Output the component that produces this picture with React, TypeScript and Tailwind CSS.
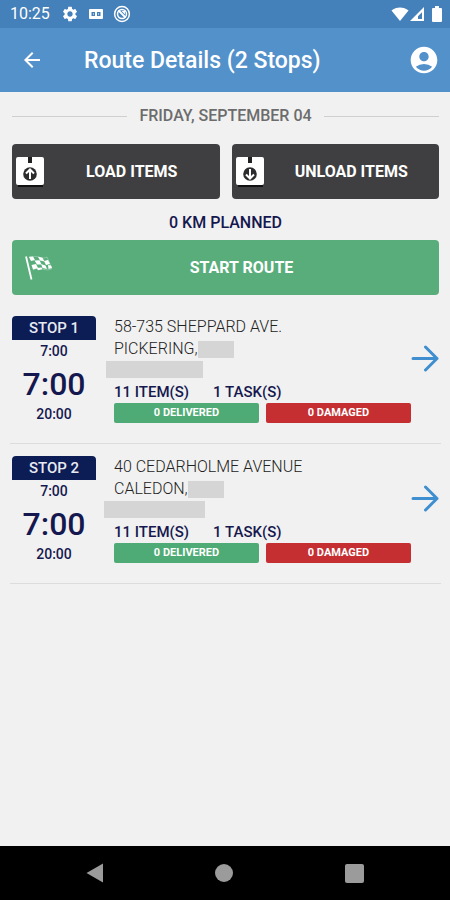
import { useState } from 'react'
import { MdAccountCircle, MdArrowBack, MdSettings } from 'react-icons/md'

interface Stop {
  id: number
  street: string
  city: string
  opens: string
  eta: string
  closes: string
  items: number
  tasks: number
  delivered: number
  damaged: number
  cityMask: string
  postalMask: string
}

const STOPS: Stop[] = [
  {
    id: 1,
    street: '58-735 SHEPPARD AVE.',
    city: 'PICKERING,',
    opens: '7:00',
    eta: '7:00',
    closes: '20:00',
    items: 11,
    tasks: 1,
    delivered: 0,
    damaged: 0,
    cityMask: 'w-9',
    postalMask: '-ml-2 w-[97px]',
  },
  {
    id: 2,
    street: '40 CEDARHOLME AVENUE',
    city: 'CALEDON,',
    opens: '7:00',
    eta: '7:00',
    closes: '20:00',
    items: 11,
    tasks: 1,
    delivered: 0,
    damaged: 0,
    cityMask: 'w-9',
    postalMask: '-ml-2.5 w-[101px]',
  },
]

function StatusBar() {
  return (
    <div className="flex h-7 items-center bg-[#4480b9] pr-2 pl-2.5 text-white">
      <span className="w-[51px] text-base">10:25</span>
      <MdSettings className="size-[18px]" />
      <svg viewBox="0 0 14 10" className="ml-2.5 h-2.5 w-3.5" aria-hidden="true">
        <path
          d="M1 0h12a1 1 0 0 1 1 1v8a1 1 0 0 1-1 1H1a1 1 0 0 1-1-1V1a1 1 0 0 1 1-1zM2.5 3v4H6V3zM8 3v4h3.5V3z"
          fill="currentColor"
          fillRule="evenodd"
        />
        <path d="M4 5h1M9 5h1" stroke="currentColor" />
      </svg>
      <svg viewBox="0 0 18 18" className="ml-2.5 size-[18px]" fill="none" stroke="currentColor" aria-hidden="true">
        <circle cx="9" cy="9" r="7.4" strokeWidth="1.5" />
        <circle cx="9" cy="9" r="4.5" strokeWidth="1.5" />
        <path d="M5.5 5.5l7 7" strokeWidth="1.8" />
        <path d="M8.5 6H12v3.5z" fill="currentColor" stroke="none" />
      </svg>
      <div className="ml-auto flex items-center">
        <svg viewBox="0 0 18 14" className="h-3.5 w-[18px]" fill="currentColor" aria-hidden="true">
          <path d="M9 14L0.5 3.4C5 -0.6 13 -0.6 17.5 3.4z" />
        </svg>
        <svg viewBox="0 0 16 16" className="size-4" aria-hidden="true">
          <path
            d="M15 1v14H1zM13 6.2L9 10.2V13h4z"
            fill="currentColor"
            fillRule="evenodd"
          />
        </svg>
        <svg viewBox="0 0 10 16" className="ml-[7px] h-4 w-2.5" fill="currentColor" aria-hidden="true">
          <path d="M3 0h4v2h2a1 1 0 0 1 1 1v12a1 1 0 0 1-1 1H1a1 1 0 0 1-1-1V3a1 1 0 0 1 1-1h2z" />
        </svg>
      </div>
    </div>
  )
}

function BoxIcon({ direction }: { direction: 'up' | 'down' }) {
  return (
    <svg viewBox="0 0 28 30" className="h-[30px] w-7" aria-hidden="true">
      <path d="M2 29h25" stroke="#111" strokeWidth="2" />
      <path d="M11 0h6v7h-6z" fill="#222" />
      <path d="M2 0h10v6h4V0h10a2 2 0 0 1 2 2v24a2 2 0 0 1-2 2H2a2 2 0 0 1-2-2V2a2 2 0 0 1 2-2z" fill="white" />
      <circle cx="14" cy="17" r="6.8" fill="#2c2c2e" />
      <path
        d={direction === 'up' ? 'M14 22v-9M10 16.5l4-4 4 4' : 'M14 12v9M10 17.5l4 4 4-4'}
        fill="none"
        stroke="white"
        strokeWidth="2"
      />
    </svg>
  )
}

function FlagIcon() {
  return (
    <svg viewBox="0 0 28 24" className="h-6 w-7" aria-hidden="true">
      <path d="M2 0.5l5.5 23" stroke="white" strokeWidth="1.8" />
      <path
        d="M5 1l4-0.5 2 3.5-4 1zM14 0.8l4.500 1 2 3.700-4.500-1zM10.500 4.500l5-0.300 2 4-4.500 0.300zM20 5l4-1 2 4-4 1zM7.500 9l4.500-1 2 4-5 1.500zM17 8l4.500 1.500 1.500 3.500-4.500-1zM13 12l4.500-0.500 0.800 1.800-4.500 1zM24 9l3 0.500 1 2.500-3.500 1z"
        fill="white"
      />
      <path
        d="M5 1c4-1.500 7-0.500 9.500 0s5 2 8.500 0l5 11.500c-4 2.500-7 1-9.500 0.500s-5-1.500-9.500 0.800"
        fill="none"
        stroke="white"
        strokeOpacity="0.5"
        strokeWidth="0.6"
      />
    </svg>
  )
}

function StopRow({ stop }: { stop: Stop }) {
  return (
    <li className="border-b border-[#dcdcdc] pt-3 pb-[19px]">
      <div className="flex px-0.5">
        <div className="flex w-[84px] shrink-0 flex-col text-center text-sm font-medium text-[#15184f]">
          <span className="rounded-t bg-[#0c1c54] text-[15px] leading-6 text-[#e8eaf2]">STOP {stop.id}</span>
          <span className="leading-[22px]">{stop.opens}</span>
          <span className="pt-0.5 text-[32px] leading-10">{stop.eta}</span>
          <span className="leading-5">{stop.closes}</span>
        </div>

        <div className="ml-[18px] min-w-0 flex-1 text-base leading-[22px] font-light text-[#222]">
          <p>{stop.street}</p>
          <p className="flex items-center">
            {stop.city}
            <span className={`h-[17px] bg-[#d5d5d5] ${stop.cityMask}`} />
          </p>
          <div className={`mt-px h-[17px] bg-[#d5d5d5] ${stop.postalMask}`} />
          <p className="flex gap-6 pt-[3px] text-[15px] font-medium text-[#15184f]">
            <span>{stop.items} ITEM(S)</span>
            <span>{stop.tasks} TASK(S)</span>
          </p>
          <div className="grid grid-cols-2 gap-[7px] text-center text-[11px] leading-5 font-bold text-white">
            <span className="rounded-xs bg-[#4fab75]">{stop.delivered} DELIVERED</span>
            <span className="rounded-xs bg-[#c62f32]">{stop.damaged} DAMAGED</span>
          </div>
        </div>

        <button type="button" aria-label={`Open stop ${stop.id}`} className="mt-7 shrink-0 self-start text-[#3f8fd0]">
          <svg viewBox="0 0 28 28" className="size-7" fill="none" stroke="currentColor" strokeWidth="3" strokeLinecap="round" strokeLinejoin="round" aria-hidden="true">
            <path d="M2 14.500h24M14.500 3l11.500 11.500-11.500 11.500" />
          </svg>
        </button>
      </div>
    </li>
  )
}

export default function App() {
  const [stops] = useState<Stop[]>(STOPS)

  return (
    <div className="flex min-h-screen flex-col bg-[#f1f1f1] font-[Roboto,sans-serif]">
      <StatusBar />

      <header className="flex h-16 items-center bg-[#5291ca] pr-2.5 pl-3 text-white">
        <button type="button" aria-label="Back" className="mr-10 ml-2">
          <MdArrowBack className="size-6" />
        </button>
        <h1 className="pt-0.5 text-[23px] font-medium">Route Details ({stops.length} Stops)</h1>
        <button type="button" aria-label="Account" className="ml-auto">
          <MdAccountCircle className="size-8" />
        </button>
      </header>

      <main className="flex-1 pr-[9px] pl-2.5">
        <div className="px-0.5">
          <div className="flex items-center gap-3 pt-3 pb-4 text-base font-medium text-[#6c6c6c]">
            <span className="h-px flex-1 bg-[#cfcfcf]" />
            <h2>FRIDAY, SEPTEMBER 04</h2>
            <span className="h-px flex-1 bg-[#cfcfcf]" />
          </div>

          <div className="grid grid-cols-2 gap-3 text-base font-bold text-white">
            <button type="button" className="flex h-[55px] items-center rounded bg-[#3f3f41] pl-1">
              <BoxIcon direction="up" />
              <span className="flex-1">LOAD ITEMS</span>
            </button>
            <button type="button" className="flex h-[55px] items-center rounded bg-[#3f3f41] pl-1">
              <BoxIcon direction="down" />
              <span className="flex-1">UNLOAD ITEMS</span>
            </button>
          </div>

          <p className="pt-3 pb-[5px] text-center text-base font-medium text-[#15184f]">0 KM PLANNED</p>

          <button type="button" className="flex h-[55px] w-full items-center rounded bg-[#58ad7b] pr-2 pl-3 text-base font-bold text-white">
            <FlagIcon />
            <span className="flex-1">START ROUTE</span>
          </button>
        </div>

        <ul className="pt-[9px]">
          {stops.map(stop => (
            <StopRow key={stop.id} stop={stop} />
          ))}
        </ul>
      </main>

      <nav className="flex h-[54px] items-center justify-around bg-black px-[30px] text-[#9b9b9b]">
        <button type="button" aria-label="System back">
          <svg viewBox="0 0 18 20" className="h-5 w-[18px]" fill="currentColor" aria-hidden="true">
            <path d="M17 0.5v19L0.5 10z" />
          </svg>
        </button>
        <button type="button" aria-label="Home" className="size-[18px] rounded-full bg-[#9b9b9b]" />
        <button type="button" aria-label="Recent apps" className="size-[19px] rounded-xs bg-[#9b9b9b]" />
      </nav>
    </div>
  )
}
